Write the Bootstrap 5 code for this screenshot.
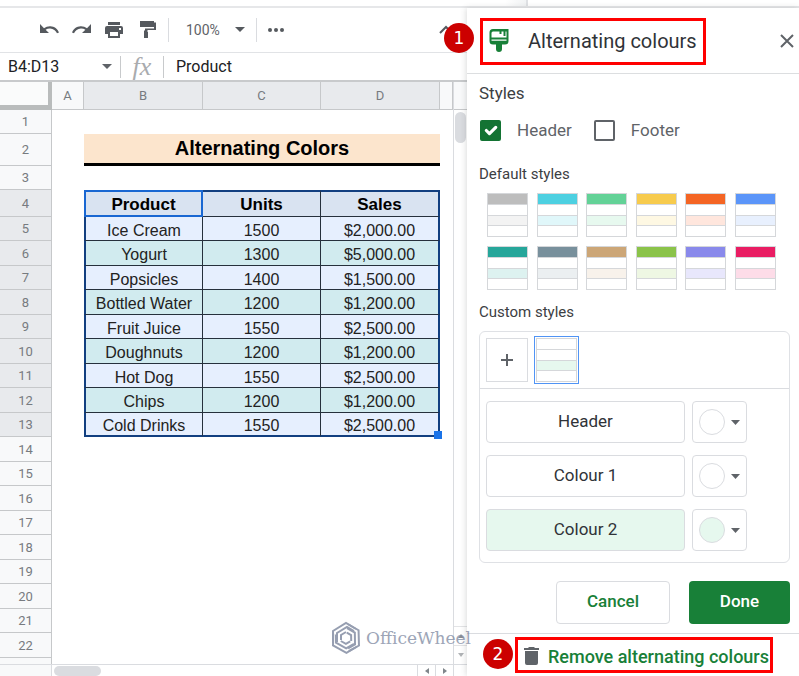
<!DOCTYPE html>
<html lang="en">
<head>
<meta charset="utf-8">
<meta name="viewport" content="width=device-width, initial-scale=1">
<title>Alternating colours</title>
<link href="https://cdn.jsdelivr.net/npm/bootstrap@5.3.0/dist/css/bootstrap.min.css" rel="stylesheet">
<style>
  body { font-family: Roboto, "Liberation Sans", sans-serif; color: #202124; background: #fff; }
  button, input, select { font-family: inherit; color: inherit; }
  svg { display: block; flex: none; }
  .top-strip { height: 8px; border-bottom: 2px solid #e6e7e9; }
  .top-strip div { width: 528px; border-right: 2px solid #dfe1e4; background: linear-gradient(90deg, #fff 96%, #f1f3f4); }
  .plain { border: 0; background: transparent; padding: 0; }
  .work { min-width: 0; }
  .frame { min-height: 0; }

  .tools { height: 45px; border-bottom: 1px solid #e1e3e6; color: #55595e; padding: 0 14px 0 38px; gap: 11px; }
  .tools .rule { width: 1px; height: 24px; background: #dadce0; }
  .zoom-select { appearance: none; width: 38px; font-size: 14px; color: #5f6368; margin-left: 6px; }
  .formula { height: 29px; border-bottom: 2px solid #c8cacc; font-size: 16px; padding-left: 8px; }
  .formula input { outline: 0; min-width: 0; }
  .name-box { width: 94px; }
  .formula .rule { width: 1px; background: #c8cacc; height: 22px; }
  .fx { font: italic 26px/24px "Liberation Serif", serif; color: #a9abae; width: 42px; text-align: center; }

  .sheet { min-height: 0; }
  .grid-view { overflow: hidden; min-width: 0; }
  .cells { table-layout: fixed; width: 100%; border-collapse: separate; border-spacing: 0; font-family: "Liberation Sans", Arial, sans-serif; font-size: 16px; line-height: 19px; text-align: center; }
  .cells th, .cells td { padding: 0; overflow: hidden; white-space: nowrap; }
  .c-num { width: 52px; } .c-a { width: 32px; } .c-b { width: 119px; } .c-data { width: 118px; }
  .cells thead th, .cells tbody th { font-family: Roboto, sans-serif; font-size: 13px; font-weight: 400; color: #777b80; background: #f8f9fa; border: 0 solid #c6c8ca; border-width: 0 1px 1px 0; }
  .cells thead th { height: 28px; }
  .cells thead th.corner { border: 0 solid #b9bcbc; border-width: 0 4px 5px 0; background: #fafbfb; }
  .cells .on, .cells tr.picked th { background: #e8eaed; }
  .cells tbody tr { height: 24px; }
  .cells tbody tr:nth-child(even) { height: 25px; }
  .cells tbody tr.r-title { height: 32px; }
  .cells tbody tr.r-head { height: 27px; }
  .cells .heading { background: #fce5cd; border-bottom: 3px solid #000; font-size: 20px; font-weight: 700; color: #000; }
  .picked td { background: #e6effe; border: 0 solid #26303c; border-width: 0 1px 1px 0; color: #222; padding-top: 3px !important; }
  .picked:nth-child(even) td { background: #d1ebef; }
  .picked.r-head td { background: #d9e3f1 !important; font-weight: 700; font-size: 17px; color: #000; border-top: 2px solid #123f80; padding-top: 1px !important; }
  .picked td:nth-child(3) { border-left: 2px solid #123f80; }
  .picked td:nth-child(5) { border-right: 2px solid #123f80; }
  .picked td:nth-child(2), .picked td:nth-child(6) { background: #fff !important; border: 0 !important; }
  .picked.r-last td { border-bottom: 2px solid #123f80; }
  .picked.r-head td.active-cell { border: 2px solid #1967d2; }
  .cells td.grip-cell { position: relative; overflow: visible; }
  .grip { position: absolute; right: -4px; bottom: -4px; width: 8px; height: 8px; background: #1a73e8; }

  .vbar { width: 14px; border-left: 1px solid #dadce0; }
  .vbar .cap { height: 28px; background: #f8f9fa; border-bottom: 1px solid #c6c8ca; }
  .vbar .thumb { height: 31px; margin: 2px 1px; border-radius: 6px; background: #dadce0; }
  .step { height: 19px; border-top: 1px solid #e3e4e6; }
  .hbar { height: 12px; border-top: 1px solid #dadce0; }
  .hbar .lead-cell { width: 52px; background: #f8f9fa; border-right: 1px solid #dadce0; }
  .hbar .thumb { width: 47px; margin: 1px 2px 0; border-radius: 6px; background: #dadce0; }
  .hbar .arrow { width: 18px; border-left: 1px solid #dadce0; }

  .side { width: 332px; flex: none; background: #fff; box-shadow: -1px 0 6px rgba(60, 64, 67, .18); color: #3c4043; }
  .side-head { height: 66px; border-bottom: 1px solid #dcdee0; padding: 10px 5px 9px 13px; }
  .marked { border: 3px solid #f00; }
  .marked-title { width: 226px; height: 47px; padding: 0 6px 2px; gap: 19px; }
  .side h1 { font-size: 20px; line-height: 24px; font-weight: 400; margin: 0; color: #303338; white-space: nowrap; }
  .side-body { padding: 9px 9px 9px 12px; }
  .side h2 { font-size: 17px; line-height: 20px; font-weight: 400; margin: 0; }
  .side h3 { font-size: 15px; line-height: 20px; font-weight: 400; margin: 0; }
  .checks { margin: 16px 0 23px 1px; }
  .checks label { font-size: 17px; line-height: 22px; color: #5f6368; margin-left: 16px; }
  .checks .form-check-input { width: 21px; height: 21px; margin: 0; border: 2px solid #5f6368; border-radius: 2px; box-shadow: none; }
  .checks .form-check-input:checked { background-color: #137333; border-color: #137333; background-size: 21px 21px; }
  .checks .second { margin-left: 22px; }
  .swatches { display: grid; grid-template-columns: repeat(6, 41px); justify-content: space-between; row-gap: 9px; margin: 9px 14px 12px 8px; }
  .swatch { display: grid; grid-template-rows: repeat(4, 1fr); gap: 1px; width: 41px; height: 44px; padding: 1px; border: 0; background: #d5d7da; }
  .swatch i { background: #fff; }
  .swatch i:first-child { background: var(--top); }
  .swatch i:nth-child(3) { background: var(--band); }
  .custom { border: 1px solid #dfe1e5; border-radius: 6px; margin-top: 9px; }
  .custom-top { padding: 4px 6px; border-bottom: 1px solid #dadce0; gap: 6px; }
  .add { width: 42px; height: 44px; border: 1px solid #dadce0; background: #fff; padding: 0; }
  .chosen { border: 1px solid #5094f5; padding: 1px; }
  .custom-rows { padding: 12px 6px 11px; gap: 12px; }
  .pair { gap: 7px; }
  .pair button { height: 42px; border: 1px solid #dadce0; border-radius: 4px; background: #fff; font-size: 17px; padding: 0; }
  .pair .wide { width: 199px; color: #303338; }
  .pair .pick { width: 55px; gap: 6px; }
  .dot { width: 26px; height: 26px; border: 1px solid #dadce0; border-radius: 50%; }
  .pair .tint, .tint { background: #e6f8ee; }
  .actions { gap: 19px; margin-top: 18px; }
  .actions .btn { height: 43px; font-size: 17px; font-weight: 500; border-radius: 4px; padding: 0 0 2px; }
  .cancel { width: 114px; border: 1px solid #dadce0; color: #188038; }
  .done { width: 101px; background: #188038; color: #fff; font-weight: 700; }
  .side-foot { border-top: 1px solid #dadce0; padding: 3px 0 3px 48px; }
  .marked-remove { width: 258px; height: 36px; padding: 2px 0 0 6px; gap: 9px; color: #188038; font-size: 18px; font-weight: 500; text-decoration: none; white-space: nowrap; }
  .side-head, .side-foot { position: relative; }
  .pin { position: absolute; width: 30px; height: 30px; border-radius: 50%; background: #c00; color: #fff; font: 17px/30px "DejaVu Sans", sans-serif; text-align: center; z-index: 3; }
  .pin-one { left: -23px; top: 15px; }
  .pin-two { left: 16px; top: 5px; }
  .watermark { position: absolute; right: -4px; bottom: 21px; z-index: 2; gap: 5px; font: 17px/20px "DejaVu Serif", serif; color: #858fa6; opacity: .8; }
</style>
<script src="https://cdn.jsdelivr.net/npm/bootstrap@5.3.0/dist/js/bootstrap.bundle.min.js"></script>
</head>
<body>
<div class="vh-100 d-flex flex-column overflow-hidden">
  <div class="top-strip d-flex flex-shrink-0"><div></div></div>
  <div class="frame d-flex flex-grow-1">
    <main class="work flex-grow-1 d-flex flex-column position-relative">
      <div class="tools d-flex align-items-center flex-shrink-0">
        <button class="plain" aria-label="Undo"><svg width="22" height="20" viewBox="0 0 22 20"><path d="M2 4v9h9L7.600 9.800C9 8.800 10.600 8.400 12.200 8.500c3.100.1 5.700 2 6.800 4.800l2-.8c-1.300-3.700-4.700-6.200-8.600-6.300-2.400-.1-4.600.7-6.400 2z" fill="currentColor"/></svg></button>
        <button class="plain" aria-label="Redo"><svg width="22" height="20" viewBox="0 0 22 20"><path d="M20 4v9h-9l3.400-3.200C13 8.800 11.400 8.400 9.800 8.500 6.700 8.600 4.100 10.500 3 13.300l-2-.8C2.300 8.800 5.700 6.300 9.600 6.200c2.400-.1 4.600.7 6.400 2z" fill="currentColor"/></svg></button>
        <button class="plain" aria-label="Print"><svg width="20" height="20" viewBox="0 0 20 20" fill="currentColor"><path d="M4 2h12v3H4z"/><path fill-rule="evenodd" d="M3 6h14a2 2 0 0 1 2 2v6h-3v4H4v-4H1V8a2 2 0 0 1 2-2zm3 6v4h8v-4zm9-4v2h2V8z"/></svg></button>
        <button class="plain ms-1" aria-label="Paint format"><svg width="18" height="20" viewBox="0 0 18 20"><path d="M1 1h14v1.500h2V10H8.500v2H9v6H5v-7.500h1V8.500h9V4.500h0V7H1z" fill="currentColor"/></svg></button>
        <span class="rule"></span>
        <select class="plain zoom-select" aria-label="Zoom"><option>100%</option></select>
        <svg width="10" height="6" viewBox="0 0 10 6"><path d="M0 0h10L5 5z" fill="currentColor"/></svg>
        <span class="rule"></span>
        <button class="plain" aria-label="More"><svg width="17" height="6" viewBox="0 0 17 6" fill="currentColor"><circle cx="2" cy="3" r="2"/><circle cx="8" cy="3" r="2"/><circle cx="14" cy="3" r="2"/></svg></button>
        <button class="plain ms-auto" aria-label="Hide menus"><svg width="14" height="10" viewBox="0 0 14 10"><path d="M1 8l6-6 6 6" fill="none" stroke="currentColor" stroke-width="2"/></svg></button>
      </div>
      <div class="formula d-flex align-items-center flex-shrink-0">
        <input class="plain name-box" aria-label="Name box" value="B4:D13">
        <svg width="10" height="6" viewBox="0 0 10 6"><path d="M0 0h10L5 5z" fill="#5f6368"/></svg>
        <span class="rule ms-2"></span>
        <span class="fx">fx</span><span class="rule"></span>
        <input class="plain flex-grow-1 ms-2 ps-1" aria-label="Formula" value="Product">
      </div>
      <div class="sheet flex-grow-1 d-flex">
        <div class="grid-view flex-grow-1">
          <table class="cells">
            <colgroup><col class="c-num"><col class="c-a"><col class="c-b"><col class="c-data"><col class="c-b"><col></colgroup>
            <thead><tr><th class="corner"></th><th>A</th><th class="on">B</th><th class="on">C</th><th class="on">D</th><th></th></tr></thead>
            <tbody>
              <tr><th>1</th><td colspan="5"></td></tr>
              <tr class="r-title"><th>2</th><td></td><td colspan="3" class="heading">Alternating Colors</td><td></td></tr>
              <tr><th>3</th><td colspan="5"></td></tr>
              <tr class="picked r-head"><th>4</th><td></td><td class="active-cell">Product</td><td>Units</td><td>Sales</td><td></td></tr>
              <tr class="picked"><th>5</th><td></td><td>Ice Cream</td><td>1500</td><td>$2,000.00</td><td></td></tr>
              <tr class="picked"><th>6</th><td></td><td>Yogurt</td><td>1300</td><td>$5,000.00</td><td></td></tr>
              <tr class="picked"><th>7</th><td></td><td>Popsicles</td><td>1400</td><td>$1,500.00</td><td></td></tr>
              <tr class="picked"><th>8</th><td></td><td>Bottled Water</td><td>1200</td><td>$1,200.00</td><td></td></tr>
              <tr class="picked"><th>9</th><td></td><td>Fruit Juice</td><td>1550</td><td>$2,500.00</td><td></td></tr>
              <tr class="picked"><th>10</th><td></td><td>Doughnuts</td><td>1200</td><td>$1,200.00</td><td></td></tr>
              <tr class="picked"><th>11</th><td></td><td>Hot Dog</td><td>1550</td><td>$2,500.00</td><td></td></tr>
              <tr class="picked"><th>12</th><td></td><td>Chips</td><td>1200</td><td>$1,200.00</td><td></td></tr>
              <tr class="picked r-last"><th>13</th><td></td><td>Cold Drinks</td><td>1550</td><td class="grip-cell">$2,500.00<span class="grip"></span></td><td></td></tr>
              <tr><th>14</th><td colspan="5"></td></tr>
              <tr><th>15</th><td colspan="5"></td></tr>
              <tr><th>16</th><td colspan="5"></td></tr>
              <tr><th>17</th><td colspan="5"></td></tr>
              <tr><th>18</th><td colspan="5"></td></tr>
              <tr><th>19</th><td colspan="5"></td></tr>
              <tr><th>20</th><td colspan="5"></td></tr>
              <tr><th>21</th><td colspan="5"></td></tr>
              <tr><th>22</th><td colspan="5"></td></tr>
              <tr><th></th><td colspan="5"></td></tr>
            </tbody>
          </table>
        </div>
        <div class="vbar d-flex flex-column flex-shrink-0">
          <div class="cap"></div><div class="thumb"></div>
          <div class="step mt-auto d-flex align-items-center justify-content-center"><svg width="6" height="4" viewBox="0 0 6 4"><path d="M0 4h6L3 0z" fill="#8a8d91"/></svg></div>
          <div class="step d-flex align-items-center justify-content-center"><svg width="6" height="4" viewBox="0 0 6 4"><path d="M0 0h6L3 4z" fill="#b0b3b6"/></svg></div>
        </div>
      </div>
      <div class="hbar d-flex flex-shrink-0">
        <div class="lead-cell"></div><div class="thumb"></div>
        <div class="arrow ms-auto d-flex align-items-center justify-content-center"><svg width="4" height="6" viewBox="0 0 4 6"><path d="M4 0v6L0 3z" fill="#80868b"/></svg></div>
        <div class="arrow d-flex align-items-center justify-content-center"><svg width="4" height="6" viewBox="0 0 4 6"><path d="M0 0v6l4-3z" fill="#80868b"/></svg></div>
        <div class="vbar"></div>
      </div>
      <div class="watermark d-flex align-items-center">
        <svg width="30" height="34" viewBox="-15 -17 30 34" fill="none" stroke="#7d879e" stroke-width="2"><defs><path id="arm" d="M-13 5V-7L0-15l10 6M-9 4V-5l10-6 7 4M-5 2v-5l5-3"/></defs><use href="#arm"/><use href="#arm" transform="rotate(120)"/><use href="#arm" transform="rotate(240)"/></svg>
        <span>OfficeWheel</span>
      </div>
    </main>

    <aside class="side d-flex flex-column position-relative">
      <div class="side-head d-flex justify-content-between">
        <span class="pin pin-one">1</span>
        <div class="marked marked-title d-flex align-items-center">
          <svg width="20" height="24" viewBox="0 0 20 24"><path fill="#188038" fill-rule="evenodd" d="M4 0h15.500v12a3.500 3.500 0 0 1-3.500 3.500h-3V20a3 3 0 0 1-6 0v-4.500H4A3.500 3.500 0 0 1 .5 12V3.500A3.500 3.500 0 0 1 4 0zm0 2.500a1.500 1.500 0 0 0-1.500 1.500v4.500h15V2.500h-1V7h-2V2.500h-2V5h-2V2.500zM2.500 10.500v1.200h15v-1.200z"/></svg>
          <h1>Alternating colours</h1>
        </div>
        <button class="plain" aria-label="Close"><svg width="14" height="14" viewBox="0 0 14 14"><path d="M1 1l12 12M13 1L1 13" stroke="#5f6368" stroke-width="2"/></svg></button>
      </div>
      <div class="side-body">
        <h2>Styles</h2>
        <div class="checks d-flex align-items-center">
          <input class="form-check-input" type="checkbox" id="has-header" checked><label for="has-header">Header</label>
          <input class="form-check-input second" type="checkbox" id="has-footer"><label for="has-footer">Footer</label>
        </div>
        <h3>Default styles</h3>
        <div class="swatches">
          <button class="swatch" style="--top:#bdbdbd;--band:#f3f3f3" aria-label="Grey"><i></i><i></i><i></i><i></i></button>
          <button class="swatch" style="--top:#4dd0e1;--band:#e0f7fa" aria-label="Cyan"><i></i><i></i><i></i><i></i></button>
          <button class="swatch" style="--top:#63d297;--band:#e7f9ef" aria-label="Green"><i></i><i></i><i></i><i></i></button>
          <button class="swatch" style="--top:#f7cb4d;--band:#fef8e3" aria-label="Yellow"><i></i><i></i><i></i><i></i></button>
          <button class="swatch" style="--top:#f46524;--band:#ffe6dd" aria-label="Orange"><i></i><i></i><i></i><i></i></button>
          <button class="swatch" style="--top:#5b95f9;--band:#e8f0fe" aria-label="Blue"><i></i><i></i><i></i><i></i></button>
          <button class="swatch" style="--top:#26a69a;--band:#ddf2f0" aria-label="Teal"><i></i><i></i><i></i><i></i></button>
          <button class="swatch" style="--top:#78909c;--band:#ebeff1" aria-label="Slate"><i></i><i></i><i></i><i></i></button>
          <button class="swatch" style="--top:#cca677;--band:#f8f2eb" aria-label="Brown"><i></i><i></i><i></i><i></i></button>
          <button class="swatch" style="--top:#8bc34a;--band:#eef7e3" aria-label="Lime"><i></i><i></i><i></i><i></i></button>
          <button class="swatch" style="--top:#8989eb;--band:#e8e7fc" aria-label="Violet"><i></i><i></i><i></i><i></i></button>
          <button class="swatch" style="--top:#e91d63;--band:#fddce8" aria-label="Pink"><i></i><i></i><i></i><i></i></button>
        </div>
        <h3>Custom styles</h3>
        <div class="custom">
          <div class="custom-top d-flex align-items-center">
            <button class="add d-flex align-items-center justify-content-center" aria-label="Add custom style"><svg width="12" height="12" viewBox="0 0 12 12"><path d="M6 0v12M0 6h12" stroke="#5f6368" stroke-width="2"/></svg></button>
            <div class="chosen"><button class="swatch" style="--top:#fff;--band:#e6f8ee" aria-label="Custom style"><i></i><i></i><i></i><i></i></button></div>
          </div>
          <div class="custom-rows d-flex flex-column">
            <div class="pair d-flex"><button class="wide">Header</button><button class="pick d-flex align-items-center justify-content-center" aria-label="Header colour"><span class="dot"></span><svg width="9" height="5" viewBox="0 0 9 5"><path d="M0 0h9L4.500 5z" fill="#5f6368"/></svg></button></div>
            <div class="pair d-flex"><button class="wide">Colour 1</button><button class="pick d-flex align-items-center justify-content-center" aria-label="Colour 1 picker"><span class="dot"></span><svg width="9" height="5" viewBox="0 0 9 5"><path d="M0 0h9L4.500 5z" fill="#5f6368"/></svg></button></div>
            <div class="pair d-flex"><button class="wide tint">Colour 2</button><button class="pick d-flex align-items-center justify-content-center" aria-label="Colour 2 picker"><span class="dot tint"></span><svg width="9" height="5" viewBox="0 0 9 5"><path d="M0 0h9L4.500 5z" fill="#5f6368"/></svg></button></div>
          </div>
        </div>
        <div class="actions d-flex justify-content-end">
          <button class="btn cancel">Cancel</button>
          <button class="btn done">Done</button>
        </div>
      </div>
      <div class="side-foot">
        <span class="pin pin-two">2</span>
        <a href="#" class="marked marked-remove d-flex align-items-center"><svg width="15" height="18" viewBox="0 0 15 18"><path d="M5 0h5l1 1h4v2H0V1h4zM1 4h13v12a2 2 0 0 1-2 2H3a2 2 0 0 1-2-2z" fill="#5f6368"/></svg>Remove alternating colours</a>
      </div>
    </aside>
  </div>
</div>
</body>
</html>
